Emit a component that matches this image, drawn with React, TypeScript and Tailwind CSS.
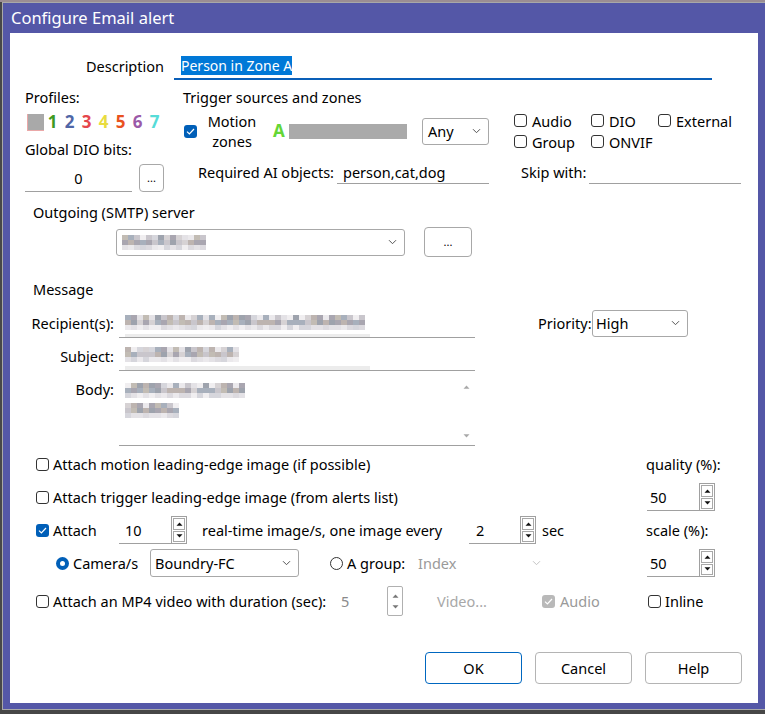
import React from "react";

const DARK = ["bg-[#a9a6b0]", "bg-[#bdb4b0]", "bg-[#c9c6cc]", "bg-[#a8b0bc]", "bg-[#d6d2d4]", "bg-[#9ea3ad]", "bg-[#c2bcb4]"];
const LIGHT = ["bg-[#e4e2e6]", "bg-[#dcdadf]", "bg-[#ebe9ec]", "bg-[#d6d6dc]", "bg-[#f0eef0]"];

// pixelated, unreadable text
function Mosaic({ cols, seed = 0 }: { cols: number; seed?: number }) {
	const rows = [0, 1, 2];
	return (
		<div className="flex flex-col">
			{rows.map((r) => (
				<div key={r} className="flex">
					{Array.from({ length: cols }).map((_, c) => {
						const n = (c * 7 + r * 5 + seed * 3 + ((c * c) % 5)) % 11;
						const pal = r === 2 ? LIGHT : r === 0 && n > 6 ? LIGHT : DARK;
						return <span key={c} className={`w-[6px] h-[5px] ${pal[n % pal.length]}`} />;
					})}
				</div>
			))}
		</div>
	);
}

function Check({ checked = false, disabled = false }: { checked?: boolean; disabled?: boolean }) {
	if (checked) {
		return (
			<span
				className={
					disabled
						? "w-[13px] h-[13px] shrink-0 rounded-[3px] bg-[#b9b9b9] flex items-center justify-center"
						: "w-[13px] h-[13px] shrink-0 rounded-[3px] bg-[#005fb8] flex items-center justify-center"
				}
			>
				<svg width="9" height="7" viewBox="0 0 9 7">
					<path d="M1 3.6L3.4 6 8 1" fill="none" stroke="white" strokeWidth="1.2" />
				</svg>
			</span>
		);
	}
	return <span className="block w-[13px] h-[13px] shrink-0 rounded-[3px] border border-[#333] bg-white" />;
}

function Radio({ checked = false }: { checked?: boolean }) {
	if (checked) {
		return (
			<span className="w-[13px] h-[13px] shrink-0 rounded-full bg-[#005fb8] flex items-center justify-center">
				<span className="block w-[5px] h-[5px] rounded-full bg-white" />
			</span>
		);
	}
	return <span className="block w-[13px] h-[13px] shrink-0 rounded-full border border-[#333] bg-white" />;
}

function Chevron({ grey = false }: { grey?: boolean }) {
	return (
		<svg width="9" height="6" viewBox="0 0 9 6">
			<path d="M1 1.2l3.5 3.5L8 1.2" fill="none" stroke={grey ? "#c4c4c4" : "#555"} strokeWidth="1" />
		</svg>
	);
}

function Tri({ up, color = "#111" }: { up?: boolean; color?: string }) {
	return (
		<svg width="7" height="4" viewBox="0 0 7 4">
			<path d={up ? "M0.5 3.8L3.5 0.5 6.5 3.8Z" : "M0.5 0.2L3.5 3.5 6.5 0.2Z"} fill={color} />
		</svg>
	);
}

function Spin() {
	return (
		<div className="w-[16px] h-[28px] border border-[#a0a0a0] p-[1px] flex flex-col gap-[1px] shrink-0">
			<div className="flex-1 border border-[#a8a8a8] flex items-center justify-center">
				<Tri up />
			</div>
			<div className="flex-1 border border-[#a8a8a8] flex items-center justify-center">
				<Tri />
			</div>
		</div>
	);
}

function SpinField({ value, pad }: { value: string; pad: string }) {
	return (
		<div className="flex h-[28px] w-full">
			<div className={`flex-1 border-b border-[#a0a0a0] flex items-center ${pad}`}>{value}</div>
			<Spin />
		</div>
	);
}

export default function App() {
	return (
		<div className="w-[765px] h-[714px] overflow-hidden bg-[#474747] text-[14.5px] leading-[18px] text-black whitespace-nowrap font-['Noto_Sans',sans-serif]">
			<div className="h-[2px] bg-[#9b8d93]" />
			<div className="ml-[2px] w-[772px] h-[708px] border border-[#a8a8a8] bg-[#5457a7] pl-[7px] flex flex-col">
				{/* title bar */}
				<div className="h-[30px] flex items-center pl-[1px] text-white text-[16.5px]">Configure Email alert</div>

				{/* client area */}
				<div className="w-[748px] h-[670px] bg-white pt-[19px] flex flex-col">
					{/* Description */}
					<div className="flex items-center h-[28px]">
						<div className="w-[154px] text-right">Description</div>
						<div className="ml-[10px] w-[538px] h-[28px] border-b-2 border-[#0a5fb8] flex items-center pl-[7px]">
							<span className="bg-[#0078d7] text-white leading-[19px] text-[14px]">Person in Zone A</span>
						</div>
					</div>

					{/* Profiles + Trigger sources */}
					<div className="mt-[8px] flex">
						<div className="ml-[15px] w-[140px] shrink-0 flex flex-col">
							<div className="h-[18px]">Profiles:</div>
							<div className="mt-[7px] h-[18px] flex items-center font-bold text-[17px]">
								<span className="ml-[2px] w-[17px] h-[17px] bg-[#a9a9a9] border-l border-b border-[#eaa8a8]" />
								<span className="w-[17px] text-center text-[#3f9a22]">1</span>
								<span className="w-[17px] text-center text-[#4f66a6]">2</span>
								<span className="w-[17px] text-center text-[#e5464c]">3</span>
								<span className="w-[17px] text-center text-[#e9dc3f]">4</span>
								<span className="w-[17px] text-center text-[#e9521f]">5</span>
								<span className="w-[17px] text-center text-[#9b5aa8]">6</span>
								<span className="w-[17px] text-center text-[#56dcd8]">7</span>
							</div>
							<div className="mt-[9px] h-[18px]">Global DIO bits:</div>
							<div className="mt-[6px] flex h-[28px]">
								<div className="w-[107px] border-b border-[#a0a0a0] flex items-center justify-center">0</div>
								<div className="ml-[7px] w-[25px] h-[28px] border border-[#a8a8a8] rounded-[4px] flex items-center justify-center text-[11px]">
									...
								</div>
							</div>
						</div>

						<div className="ml-[18px] flex flex-col">
							<div className="h-[18px]">Trigger sources and zones</div>
							<div className="mt-[4px] h-[42px] flex items-center">
								<span className="ml-[1px]">
									<Check checked />
								</span>
								<div className="ml-[6px] w-[58px] text-center leading-[20px]">
									Motion
									<br />
									zones
								</div>
								<span className="ml-[12px] w-[14px] font-bold text-[17px] text-[#64d636]">A</span>
								<span className="ml-[2px] w-[118px] h-[15px] bg-[#aaaaaa]" />
								<div className="ml-[15px] w-[67px] h-[27px] border border-[#a8a8a8] rounded-[3px] flex items-center justify-between pl-[5px] pr-[7px]">
									<span>Any</span>
									<Chevron />
								</div>
								<div className="ml-[25px] grid grid-cols-[77px_67px_auto]">
									<label className="h-[21px] flex items-center gap-[5px]">
										<Check /> Audio
									</label>
									<label className="h-[21px] flex items-center gap-[5px]">
										<Check /> DIO
									</label>
									<label className="h-[21px] flex items-center gap-[5px]">
										<Check /> External
									</label>
									<label className="h-[21px] flex items-center gap-[5px]">
										<Check /> Group
									</label>
									<label className="h-[21px] flex items-center gap-[5px]">
										<Check /> ONVIF
									</label>
								</div>
							</div>
							<div className="mt-[8px] h-[24px] flex">
								<div className="w-[151px] text-right self-center">Required AI objects:</div>
								<div className="ml-[3px] w-[152px] border-b border-[#a0a0a0] pl-[6px] flex items-center">person,cat,dog</div>
								<div className="ml-[32px] w-[63px] self-center">Skip with:</div>
								<div className="ml-[5px] w-[152px] border-b border-[#a0a0a0]" />
							</div>
						</div>
					</div>

					{/* SMTP server */}
					<div className="mt-[11px] ml-[23px] h-[18px]">Outgoing (SMTP) server</div>
					<div className="mt-[6px] h-[30px] flex items-center">
						<div className="ml-[106px] w-[289px] h-[27px] border border-[#a8a8a8] rounded-[3px] flex items-center justify-between pl-[5px] pr-[7px]">
							<Mosaic cols={14} seed={2} />
							<Chevron />
						</div>
						<div className="ml-[19px] w-[48px] h-[30px] border border-[#a8a8a8] rounded-[4px] flex items-center justify-center text-[11px]">
							...
						</div>
					</div>

					{/* Message */}
					<div className="mt-[23px] ml-[23px] h-[18px]">Message</div>
					<div className="mt-[10px] h-[30px] flex items-center">
						<div className="w-[104px] text-right">Recipient(s):</div>
						<div className="ml-[5px] w-[356px] h-[30px] border-b border-[#a0a0a0] flex flex-col pl-[6px]">
							<div className="mt-[7px]">
								<Mosaic cols={40} seed={1} />
							</div>
							<div className="mt-auto w-[245px] h-[3px] bg-[#ececec]" />
						</div>
						<div className="ml-[63px] w-[50px]">Priority:</div>
						<div className="ml-[4px] w-[96px] h-[27px] border border-[#a8a8a8] rounded-[3px] flex items-center justify-between pl-[3px] pr-[7px]">
							<span>High</span>
							<Chevron />
						</div>
					</div>
					<div className="mt-[3px] h-[30px] flex items-center">
						<div className="w-[104px] text-right">Subject:</div>
						<div className="ml-[5px] w-[356px] h-[30px] border-b border-[#a0a0a0] flex flex-col pl-[6px]">
							<div className="mt-[6px]">
								<Mosaic cols={19} seed={4} />
							</div>
							<div className="mt-auto w-[245px] h-[4px] bg-[#ececec]" />
						</div>
					</div>
					<div className="mt-[4px] h-[71px] flex items-start">
						<div className="w-[104px] text-right pt-[5px]">Body:</div>
						<div className="ml-[5px] w-[356px] h-[71px] border-b border-[#a0a0a0] flex pl-[6px]">
							<div className="flex-1 flex flex-col pt-[8px] gap-[5px]">
								<Mosaic cols={20} seed={3} />
								<Mosaic cols={9} seed={5} />
							</div>
							<div className="w-[18px] flex flex-col items-center justify-between pt-[10px] pb-[7px]">
								<Tri up color="#a9a9a9" />
								<Tri color="#a9a9a9" />
							</div>
						</div>
					</div>

					{/* Attachments */}
					<div className="mt-[9px] h-[18px] flex items-center">
						<div className="ml-[26px] w-[610px] flex items-center">
							<Check />
							<span className="ml-[4px]">Attach motion leading-edge image (if possible)</span>
						</div>
						<span>quality (%):</span>
					</div>
					<div className="mt-[9px] h-[30px] flex items-center">
						<div className="ml-[26px] w-[611px] flex items-center">
							<Check />
							<span className="ml-[4px]">Attach trigger leading-edge image (from alerts list)</span>
						</div>
						<div className="w-[68px]">
							<SpinField value="50" pad="pl-[3px]" />
						</div>
					</div>
					<div className="mt-[3px] h-[30px] flex items-center">
						<div className="ml-[26px]">
							<Check checked />
						</div>
						<span className="ml-[4px] w-[66px]">Attach</span>
						<div className="w-[68px]">
							<SpinField value="10" pad="pl-[6px]" />
						</div>
						<span className="ml-[15px] w-[267px]">real-time image/s, one image every</span>
						<div className="w-[67px]">
							<SpinField value="2" pad="pl-[7px]" />
						</div>
						<span className="ml-[6px] w-[104px]">sec</span>
						<span>scale (%):</span>
					</div>
					<div className="mt-[3px] h-[30px] flex items-center">
						<div className="ml-[46px]">
							<Radio checked />
						</div>
						<span className="ml-[4px] w-[77px]">Camera/s</span>
						<div className="w-[149px] h-[28px] border border-[#a8a8a8] rounded-[3px] flex items-center justify-between pl-[4px] pr-[7px]">
							<span>Boundry-FC</span>
							<Chevron />
						</div>
						<div className="ml-[31px]">
							<Radio />
						</div>
						<span className="ml-[4px] w-[71px]">A group:</span>
						<div className="w-[126px] flex items-center justify-between pr-[3px] text-[#9a9a9a]">
							<span>Index</span>
							<Chevron grey />
						</div>
						<div className="ml-[103px] w-[68px]">
							<SpinField value="50" pad="pl-[3px]" />
						</div>
					</div>
					<div className="mt-[8px] h-[30px] flex items-center">
						<div className="ml-[26px]">
							<Check />
						</div>
						<span className="ml-[4px] w-[288px]">Attach an MP4 video with duration (sec):</span>
						<span className="w-[46px] text-[#8a8a8a]">5</span>
						<div className="w-[16px] h-[30px] border border-[#b0b0b0] rounded-[2px] flex flex-col items-center justify-center gap-[7px]">
							<Tri up color="#777" />
							<Tri color="#777" />
						</div>
						<span className="ml-[34px] w-[105px] text-[#a8a8a8]">Video...</span>
						<Check checked disabled />
						<span className="ml-[5px] w-[88px] text-[#9a9a9a]">Audio</span>
						<Check />
						<span className="ml-[4px]">Inline</span>
					</div>

					{/* buttons */}
					<div className="mt-[36px] flex">
						<div className="ml-[415px] w-[97px] h-[32px] border border-[#0067c0] rounded-[4px] flex items-center justify-center">OK</div>
						<div className="ml-[13px] w-[97px] h-[32px] border border-[#b4b4b4] rounded-[4px] flex items-center justify-center">Cancel</div>
						<div className="ml-[13px] w-[97px] h-[32px] border border-[#b4b4b4] rounded-[4px] flex items-center justify-center">Help</div>
					</div>
				</div>
			</div>
		</div>
	);
}
